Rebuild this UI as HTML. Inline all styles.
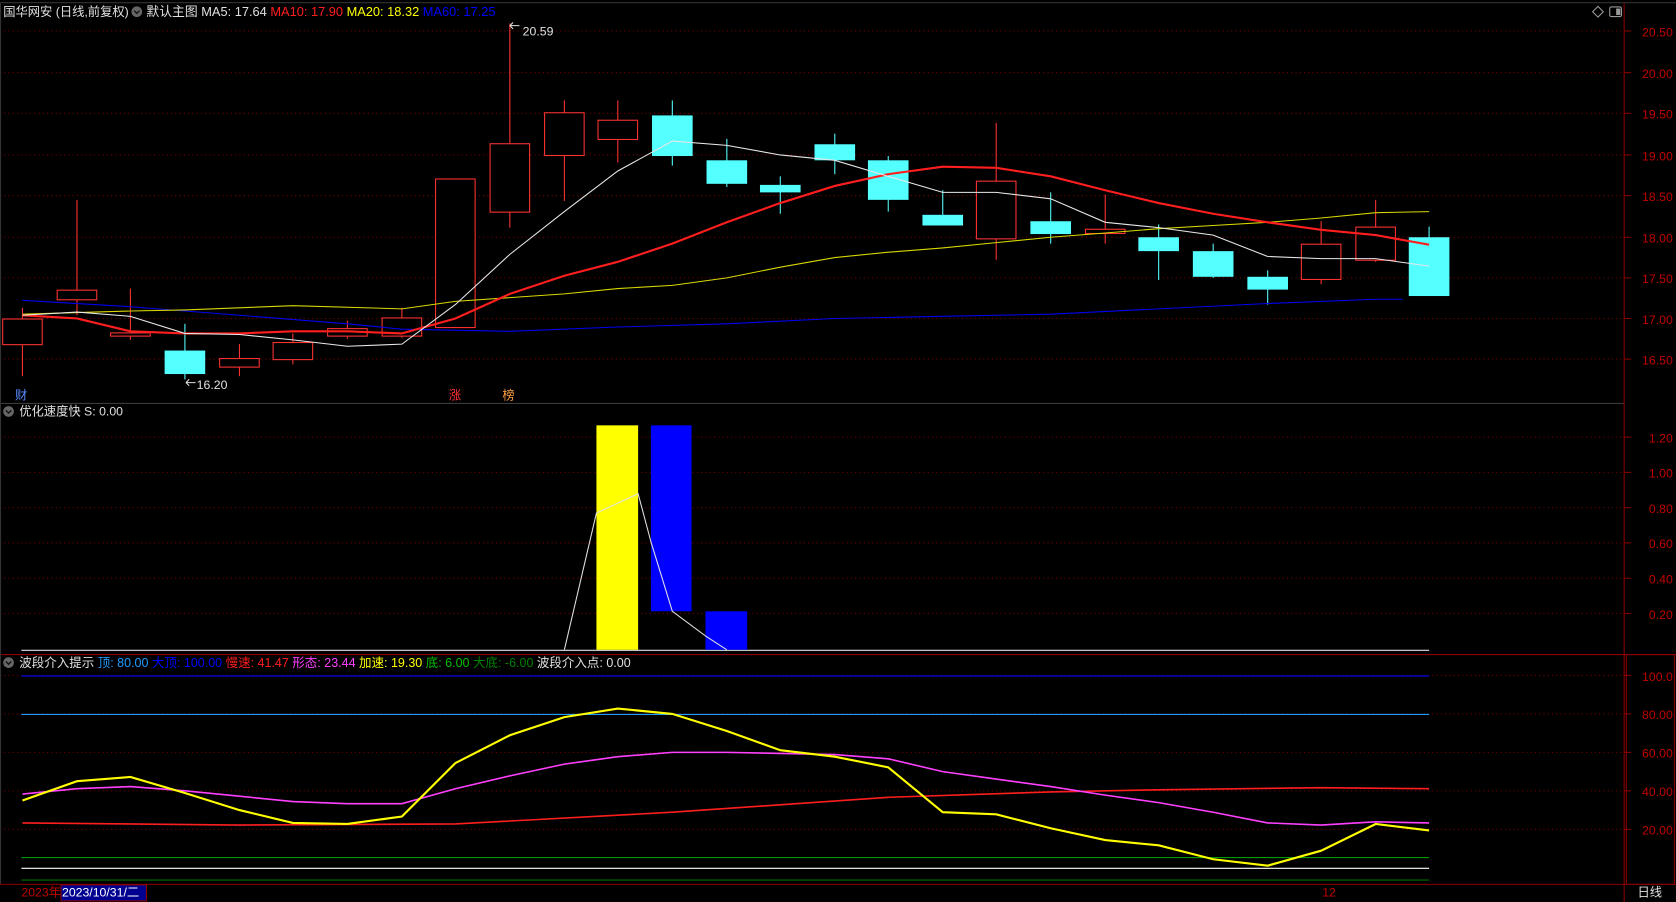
<!DOCTYPE html>
<html><head><meta charset="utf-8"><style>
html,body{margin:0;padding:0;background:#000;overflow:hidden}
svg{display:block}
text{font-family:"Liberation Sans","Noto Sans CJK SC",sans-serif;font-size:11.5px}
.m{font-size:12px}
.p{font-size:11.7px}
</style></head><body>
<svg width="1676" height="902" viewBox="0 0 1568 844" preserveAspectRatio="none" xmlns="http://www.w3.org/2000/svg">
<rect width="1568" height="844" fill="#000"/>
<g stroke="#7a0000" stroke-dasharray="1,3" stroke-width="1">
<line x1="0" x2="1519" y1="29" y2="29"/><line x1="0" x2="1519" y1="68" y2="68"/><line x1="0" x2="1519" y1="106" y2="106"/><line x1="0" x2="1519" y1="145" y2="145"/><line x1="0" x2="1519" y1="183" y2="183"/><line x1="0" x2="1519" y1="222" y2="222"/><line x1="0" x2="1519" y1="260" y2="260"/><line x1="0" x2="1519" y1="298" y2="298"/><line x1="0" x2="1519" y1="336" y2="336"/>
<line x1="0" x2="1519" y1="409" y2="409"/><line x1="0" x2="1519" y1="442" y2="442"/><line x1="0" x2="1519" y1="475" y2="475"/><line x1="0" x2="1519" y1="508" y2="508"/><line x1="0" x2="1519" y1="541" y2="541"/><line x1="0" x2="1519" y1="574" y2="574"/>
<line x1="0" x2="1519" y1="632" y2="632"/><line x1="0" x2="1519" y1="668" y2="668"/><line x1="0" x2="1519" y1="704" y2="704"/><line x1="0" x2="1519" y1="740" y2="740"/><line x1="0" x2="1519" y1="776" y2="776"/>
</g>
<line x1="0" x2="1568" y1="2.5" y2="2.5" stroke="#333"/>
<line x1="0" x2="1519" y1="377.5" y2="377.5" stroke="#3a3a3a"/>
<line x1="0" x2="1568" y1="612.5" y2="612.5" stroke="#8b0000"/>
<line x1="0" x2="1568" y1="827.5" y2="827.5" stroke="#8b0000"/>
<line x1="1519.5" x2="1519.5" y1="3" y2="844" stroke="#8b0000"/>
<rect x="1521.5" y="612.5" width="45" height="215" fill="none" stroke="#8b0000"/>
<line x1="0.5" x2="0.5" y1="3" y2="827" stroke="#333"/>
<g stroke="#8b0000">
<line x1="1519" x2="1526" y1="29" y2="29"/><line x1="1519" x2="1526" y1="68" y2="68"/><line x1="1519" x2="1526" y1="106" y2="106"/><line x1="1519" x2="1526" y1="145" y2="145"/><line x1="1519" x2="1526" y1="183" y2="183"/><line x1="1519" x2="1526" y1="222" y2="222"/><line x1="1519" x2="1526" y1="260" y2="260"/><line x1="1519" x2="1526" y1="298" y2="298"/><line x1="1519" x2="1526" y1="336" y2="336"/>
<line x1="1519" x2="1526" y1="409" y2="409"/><line x1="1519" x2="1526" y1="442" y2="442"/><line x1="1519" x2="1526" y1="475" y2="475"/><line x1="1519" x2="1526" y1="508" y2="508"/><line x1="1519" x2="1526" y1="541" y2="541"/><line x1="1519" x2="1526" y1="574" y2="574"/>
<line x1="1519" x2="1526" y1="632" y2="632"/><line x1="1519" x2="1526" y1="668" y2="668"/><line x1="1519" x2="1526" y1="704" y2="704"/><line x1="1519" x2="1526" y1="740" y2="740"/><line x1="1519" x2="1526" y1="776" y2="776"/>
</g>
<g fill="#c00000" text-anchor="end">
<text x="1565" y="34">20.50</text><text x="1565" y="73">20.00</text><text x="1565" y="111">19.50</text><text x="1565" y="150">19.00</text><text x="1565" y="188">18.50</text><text x="1565" y="227">18.00</text><text x="1565" y="265">17.50</text><text x="1565" y="303">17.00</text><text x="1565" y="341">16.50</text>
<text x="1565" y="414">1.20</text><text x="1565" y="447">1.00</text><text x="1565" y="480">0.80</text><text x="1565" y="513">0.60</text><text x="1565" y="546">0.40</text><text x="1565" y="579">0.20</text>
<text x="1565" y="637">100.0</text><text x="1565" y="673">80.00</text><text x="1565" y="709">60.00</text><text x="1565" y="745">40.00</text><text x="1565" y="781">20.00</text>
</g>
<g stroke-width="1">
<g stroke="#ff3232" fill="#000">
<line x1="21" x2="21" y1="288" y2="352"/><rect x="2.5" y="298.5" width="37" height="24"/>
<line x1="72" x2="72" y1="187" y2="295"/><rect x="53.5" y="271.5" width="37" height="9"/>
<line x1="122" x2="122" y1="270" y2="318"/><rect x="103.5" y="311.5" width="37" height="3"/>
<line x1="224" x2="224" y1="322" y2="352"/><rect x="205.5" y="335.5" width="37" height="8"/>
<line x1="274" x2="274" y1="312" y2="341"/><rect x="255.5" y="320.5" width="37" height="16"/>
<line x1="325" x2="325" y1="300" y2="317"/><rect x="306.5" y="307.5" width="37" height="7"/>
<line x1="376" x2="376" y1="288" y2="316"/><rect x="357.5" y="297.5" width="37" height="17"/>
<line x1="426" x2="426" y1="167" y2="306"/><rect x="407.5" y="167.5" width="37" height="139"/>
<line x1="477" x2="477" y1="22" y2="213"/><rect x="458.5" y="134.5" width="37" height="64"/>
<line x1="528" x2="528" y1="94" y2="188"/><rect x="509.5" y="105.5" width="37" height="40"/>
<line x1="578" x2="578" y1="94" y2="152"/><rect x="559.5" y="112.5" width="37" height="18"/>
<line x1="932" x2="932" y1="115" y2="243"/><rect x="913.5" y="169.5" width="37" height="54"/>
<line x1="1034" x2="1034" y1="182" y2="228"/><rect x="1015.5" y="214.5" width="37" height="4"/>
<line x1="1236" x2="1236" y1="207" y2="266"/><rect x="1217.5" y="228.5" width="37" height="33"/>
<line x1="1287" x2="1287" y1="187" y2="245"/><rect x="1268.5" y="212.5" width="37" height="31"/>
</g>
<g stroke="#54ffff" fill="#54ffff">
<line x1="173" x2="173" y1="303" y2="355"/><rect x="154.5" y="328.5" width="37" height="21"/>
<line x1="629" x2="629" y1="94" y2="155"/><rect x="610.5" y="108.5" width="37" height="37"/>
<line x1="680" x2="680" y1="130" y2="175"/><rect x="661.5" y="150.5" width="37" height="21"/>
<line x1="730" x2="730" y1="165" y2="200"/><rect x="711.5" y="173.5" width="37" height="6"/>
<line x1="781" x2="781" y1="125" y2="163"/><rect x="762.5" y="135.5" width="37" height="14"/>
<line x1="831" x2="831" y1="146" y2="198"/><rect x="812.5" y="150.5" width="37" height="36"/>
<line x1="882" x2="882" y1="178" y2="210"/><rect x="863.5" y="201.5" width="37" height="9"/>
<line x1="983" x2="983" y1="180" y2="228"/><rect x="964.5" y="207.5" width="37" height="11"/>
<line x1="1084" x2="1084" y1="210" y2="262"/><rect x="1065.5" y="222.5" width="37" height="12"/>
<line x1="1135" x2="1135" y1="228" y2="260"/><rect x="1116.5" y="235.5" width="37" height="23"/>
<line x1="1186" x2="1186" y1="253" y2="285"/><rect x="1167.5" y="259.5" width="37" height="11"/>
<line x1="1337" x2="1337" y1="212" y2="276"/><rect x="1318.5" y="222.5" width="37" height="54"/>
</g>
</g>
<g fill="none" stroke-width="1">
<polyline stroke="#0000ee" points="21,281 122,287 224,295 325,303 376,308 477,310 578,306 680,303 781,298 882,296 983,294 1084,289 1186,284 1287,280 1312,280"/>
<polyline stroke="#d8d800" points="21,294 122,291 173,290 274,286 376,289 426,282 528,275 578,270 629,267 680,260 730,250 781,241 831,236 882,232 932,227 983,222 1034,218 1084,214 1135,211 1186,208 1236,204 1287,199 1337,198"/>
<polyline stroke="#ff1e1e" stroke-width="2" points="21,295 72,298 122,310 173,312 224,312 274,310 325,310 376,312 426,298 477,275 528,258 578,245 629,228 680,208 730,190 781,174 831,163 882,156 932,157 983,165 1034,178 1084,190 1135,200 1186,208 1236,215 1287,220 1337,229"/>
<polyline stroke="#e8e8e8" points="21,295 72,292 122,296 173,312 224,313 274,318 325,324 376,322 426,285 477,238 528,198 578,160 629,132 680,136 730,145 781,150 831,165 882,180 932,180 983,186 1034,208 1084,213 1135,220 1186,240 1236,242 1287,242 1337,249"/>
</g>
<text x="489" y="33" fill="#e0e0e0">20.59</text>
<path d="M477,24 l3,-3 M477,24 l3,3 M477,24 h9" stroke="#e0e0e0" fill="none"/>
<text x="184" y="364" fill="#e0e0e0">16.20</text>
<path d="M174,358 l3,-3 M174,358 l3,3 M174,358 h9" stroke="#e0e0e0" fill="none"/>
<text x="14" y="374" fill="#5a8cff" font-size="11">财</text>
<text x="420" y="374" fill="#ff3030" font-size="11">涨</text>
<text x="470" y="374" fill="#ffa040" font-size="11">榜</text>
<text x="3" y="15" fill="#e0e0e0">国华网安 (日线,前复权)</text>
<circle cx="128" cy="11" r="5" fill="#666"/><path d="M125.5,10 l2.5,2.5 l2.5,-2.5" stroke="#111" fill="none" stroke-width="1.3"/>
<text class="m" x="137" y="15"><tspan fill="#e0e0e0">默认主图  MA5: 17.64 </tspan><tspan fill="#ff1e1e">MA10: 17.90 </tspan><tspan fill="#ffff00">MA20: 18.32 </tspan><tspan fill="#0000ff">MA60: 17.25</tspan></text>
<path d="M1490,11 l5,-5 l5,5 l-5,5 z" stroke="#999" fill="none"/>
<rect x="1506" y="6.5" width="11" height="9" rx="1.5" stroke="#999" fill="none"/><rect x="1512" y="8" width="4" height="6" fill="#999"/>
<circle cx="8" cy="385" r="5" fill="#666"/><path d="M5.5,384 l2.5,2.5 l2.5,-2.5" stroke="#111" fill="none" stroke-width="1.3"/>
<text x="18" y="389" fill="#e0e0e0">优化速度快  S: 0.00</text>
<line x1="20" x2="1337" y1="608.5" y2="608.5" stroke="#e0e0e0"/>
<rect x="558" y="398" width="39" height="210" fill="#ffff00"/>
<rect x="609" y="398" width="38" height="174" fill="#0000ff"/>
<rect x="660" y="572" width="39" height="36" fill="#0000ff"/>
<polyline fill="none" stroke="#e0e0e0" points="528,608 558,480 597,462 609,507 629,572 660,595 680,608"/>
<circle cx="8" cy="620" r="5" fill="#666"/><path d="M5.5,619 l2.5,2.5 l2.5,-2.5" stroke="#111" fill="none" stroke-width="1.3"/>
<text class="p" x="18" y="624"><tspan fill="#e0e0e0">波段介入提示 </tspan><tspan fill="#1e9bff">顶: 80.00 </tspan><tspan fill="#0000ff">大顶: 100.00 </tspan><tspan fill="#ff1e1e">慢速: 41.47 </tspan><tspan fill="#ff40ff">形态: 23.44 </tspan><tspan fill="#ffff00">加速: 19.30 </tspan><tspan fill="#00c000">底: 6.00 </tspan><tspan fill="#008000">大底: -6.00 </tspan><tspan fill="#e0e0e0">波段介入点: 0.00</tspan></text>
<g fill="none">
<line x1="20" x2="1337" y1="632.5" y2="632.5" stroke="#0000ff"/>
<line x1="20" x2="1337" y1="668.5" y2="668.5" stroke="#1e9bff"/>
<line x1="20" x2="1337" y1="802.5" y2="802.5" stroke="#00b000"/>
<line x1="20" x2="1337" y1="812.5" y2="812.5" stroke="#ffffff"/>
<line x1="20" x2="1337" y1="823.5" y2="823.5" stroke="#007000"/>
<polyline stroke="#ff1e1e" stroke-width="1.5" points="21,770 224,772 426,771 629,760 831,746 983,741 1084,739 1236,737 1337,738"/>
<polyline stroke="#ff40ff" stroke-width="1.5" points="21,743 72,738 122,736 173,740 224,745 274,750 325,752 376,752 426,738 477,726 528,715 578,708 629,704 680,704 730,705 781,706 831,710 882,722 932,729 983,736 1034,744 1084,751 1135,760 1186,770 1236,772 1287,769 1337,770"/>
<polyline stroke="#ffff00" stroke-width="2" points="21,749 72,731 122,727 173,742 224,758 274,770 325,771 376,764 426,714 477,688 528,671 578,663 629,668 680,684 730,702 781,708 831,718 882,760 932,762 983,775 1034,786 1084,791 1135,804 1186,810 1236,796 1287,771 1337,777"/>
</g>
<text x="20" y="839" fill="#c00000">2023年</text>
<rect x="57" y="828" width="80" height="15" fill="#000090" stroke="#8b0000"/>
<text x="58" y="839" fill="#ffffff">2023/10/31/二</text>
<text x="1237" y="839" fill="#c00000">12</text>
<text x="1532" y="839" fill="#e0e0e0">日线</text>
</svg>
</body></html>
